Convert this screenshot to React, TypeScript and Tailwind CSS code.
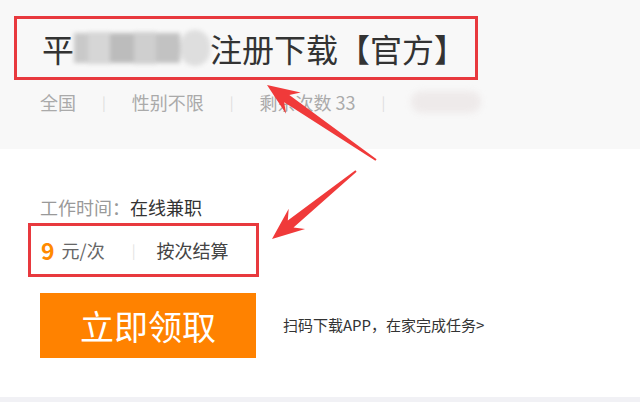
import React from 'react';

type Pt = [number, number];

// tapered annotation arrow, tail -> tip
const arrowPoints = (tail: Pt, tip: Pt) => {
  const dx = tip[0] - tail[0];
  const dy = tip[1] - tail[1];
  const len = Math.hypot(dx, dy);
  const ux = dx / len;
  const uy = dy / len;
  const nx = -uy;
  const ny = ux;
  const headLen = 32;
  const headW = 13;
  const neckW = 4.5;
  const tailW = 1;
  const bx = tip[0] - ux * headLen;
  const by = tip[1] - uy * headLen;
  const nbx = tip[0] - ux * (headLen - 8);
  const nby = tip[1] - uy * (headLen - 8);
  const pts: Pt[] = [
    [tail[0] + nx * tailW, tail[1] + ny * tailW],
    [nbx + nx * neckW, nby + ny * neckW],
    [bx + nx * headW, by + ny * headW],
    tip,
    [bx - nx * headW, by - ny * headW],
    [nbx - nx * neckW, nby - ny * neckW],
    [tail[0] - nx * tailW, tail[1] - ny * tailW],
  ];
  return pts.map((p) => `${p[0].toFixed(1)},${p[1].toFixed(1)}`).join(' ');
};

const Sep = () => <span className="mx-[26px] text-[14px] text-[#dddddd]">|</span>;

const App: React.FC = () => {
  return (
    <div
      className="relative w-[640px] h-[402px] overflow-hidden bg-white"
      style={{ fontFamily: '"Noto Sans CJK SC", "Noto Sans", sans-serif' }}
    >
      <div className="h-[149px] bg-[#f8f8f8] pt-[16px] pl-[14px]">
        <div className="w-[464px] h-[64px] border-[3px] border-[#e8393e] flex items-center pl-[25px]">
          <span className="text-[32px] leading-none text-[#333333]">平</span>
          <span className="relative inline-block w-[136px] h-[36px]">
            <span className="absolute inset-0 flex items-center blur-[2px]">
              <span className="w-[14px] h-[30px] bg-[#c9c9c9]" />
              <span className="w-[22px] h-[32px] bg-[#d6d6d6]" />
              <span className="w-[24px] h-[30px] bg-[#bcbcbc]" />
              <span className="w-[22px] h-[32px] bg-[#cfcfcf]" />
              <span className="w-[24px] h-[30px] bg-[#c2c2c2]" />
              <span className="w-[30px] h-[36px] rounded-full bg-[#dedede]" />
            </span>
          </span>
          <span className="text-[32px] leading-none text-[#333333]">注册下载【官方】</span>
        </div>
        <div className="mt-[10px] pl-[26px] flex items-center h-[24px] text-[18px] text-[#aaaaaa]">
          <span>全国</span>
          <Sep />
          <span>性别不限</span>
          <Sep />
          <span>剩余次数 33</span>
          <Sep />
          <span className="inline-block w-[70px] h-[22px] rounded-full bg-[#eeeaea] blur-[3px]" />
        </div>
      </div>

      <div className="h-[248px] pt-[46px] pl-[40px]">
        <div className="h-[24px] flex items-center text-[18px]">
          <span className="text-[#999999]">工作时间：</span>
          <span className="text-[#333333]">在线兼职</span>
        </div>
        <div className="mt-[4px] -ml-[12px] w-[231px] h-[54px] border-[3px] border-[#e8393e] flex items-center pl-[10px]">
          <span className="text-[23px] font-bold text-[#ff8a00] leading-none">9</span>
          <span className="ml-[7px] text-[18px] text-[#666666]">元/次</span>
          <span className="ml-[27px] text-[14px] text-[#e2e2e2]">|</span>
          <span className="ml-[21px] text-[18px] text-[#444444]">按次结算</span>
        </div>
        <div className="mt-[16px] flex items-center">
          <div className="w-[216px] h-[65px] bg-[#ff8200] flex items-center justify-center text-white text-[34px]">
            立即领取
          </div>
          <span className="ml-[27px] text-[15px] text-[#333333]">扫码下载APP，在家完成任务&gt;</span>
        </div>
      </div>
      <div className="h-[5px] bg-[#f1f1f5]" />

      <svg className="absolute inset-0 pointer-events-none" width="640" height="402">
        <polygon points={arrowPoints([376, 160], [267, 85])} fill="#f03a3a" />
        <polygon points={arrowPoints([356, 171], [272, 239])} fill="#f03a3a" />
      </svg>
    </div>
  );
};

export default App;
